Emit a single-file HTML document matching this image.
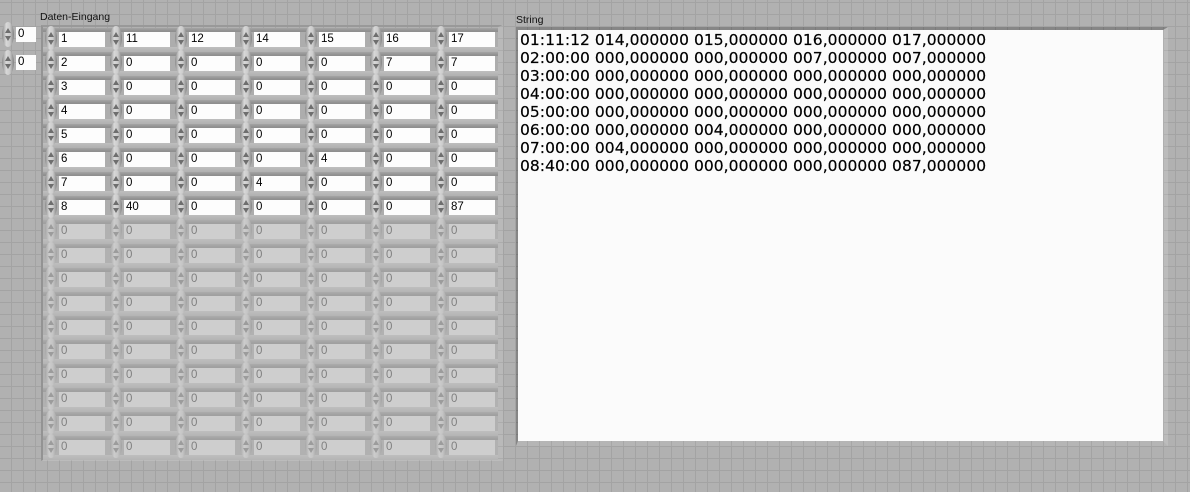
<!DOCTYPE html>
<html><head><meta charset="utf-8"><style>
html,body{margin:0;padding:0}
body{width:1190px;height:492px;overflow:hidden;position:relative;background:#b1b1b1;font-family:"Liberation Sans",sans-serif}
.gy{position:absolute;left:0;top:2px;width:1190px;height:490px;background:repeating-linear-gradient(180deg,#a3a3a3 0 1px,transparent 1px 12px)}
.gx{position:absolute;left:11px;top:0;width:1179px;height:492px;background:repeating-linear-gradient(90deg,#a3a3a3 0 1px,transparent 1px 12px)}
.l{position:absolute;font-size:10.5px;line-height:12px;color:#111}
#arr{position:absolute;left:41px;top:25px;width:462px;height:436px;border-top:2px solid #999;border-left:2px solid #939393;border-right:5px solid rgba(255,255,255,.1);border-bottom:1px solid rgba(255,255,255,.15);box-sizing:border-box;display:grid;grid-template-columns:repeat(7,65px);grid-auto-rows:24px;padding:1px 0 0 0}
s,u{display:block;position:relative;text-decoration:none;width:65px;height:24px;background:linear-gradient(#a4a4a4 0,#8f8f8f 3px,#8f8f8f 4px,#adadad 4px,#adadad 19px,#bebebe 19px,#b0b0b0 24px)}
u{background:linear-gradient(#acacac 0,#a0a0a0 3px,#a0a0a0 4px,#b1b1b1 4px,#b1b1b1 19px,#bebebe 19px,#b4b4b4 24px)}
s::before,u::before,.z::before{content:"";position:absolute;left:2px;top:-2px;width:12px;height:24px;border-radius:50%;background:linear-gradient(90deg,#8c8c8c,#d8d8d8 35%,#cbcbcb 65%,#828282)}
u::before{background:linear-gradient(90deg,#a6a6a6,#cccccc 35%,#c4c4c4 65%,#a2a2a2)}
s::after,u::after,.z::after{content:"";position:absolute;left:5px;top:4px;width:6px;height:13px;background:#6e6e6e;clip-path:polygon(50% 0,100% 38%,50% 38%,50% 62%,100% 62%,50% 100%,0 62%,50% 62%,50% 38%,0 38%)}
u::after{background:#9c9c9c}
s b,u b{position:absolute;left:16px;top:4px;width:46px;height:15px;background:#fdfdfd;font:normal 11.5px/15px "Liberation Sans",sans-serif;color:#000;padding-left:2px;box-sizing:border-box}
u b{background:#cecece;color:#808080}
.z{position:absolute;left:1px;width:37px;height:24px}
.z::before{left:1px;top:0;height:25px}
.z::after{left:4px;top:6px}
.z b{position:absolute;left:15px;top:5px;width:20px;height:15px;background:#fdfdfd;font:normal 11.5px/15px "Liberation Sans",sans-serif;padding-left:2px;box-sizing:border-box}
#str{position:absolute;left:516px;top:27px;width:652px;height:419px;border-top:3px solid rgba(0,0,0,.24);border-left:2px solid rgba(0,0,0,.24);border-right:5px solid rgba(255,255,255,.14);border-bottom:5px solid rgba(255,255,255,.05);box-sizing:border-box}
#txt{position:absolute;left:0;top:0;width:645px;height:411px;background:#fbfbfb;font-family:"DejaVu Sans",sans-serif;font-size:15.5px;letter-spacing:.04px;line-height:18px;color:#000;padding:1px 0 0 2px;box-sizing:border-box;white-space:pre;-webkit-text-stroke:.2px #000}
</style></head><body>
<div class="gx"></div><div class="gy"></div>
<div class="l" style="left:40px;top:11px">Daten-Eingang</div>
<div class="l" style="left:516px;top:14px">String</div>
<div class="z" style="top:22px"><b>0</b></div>
<div class="z" style="top:50px"><b>0</b></div>
<div id="arr">
<s><b>1</b></s><s><b>11</b></s><s><b>12</b></s><s><b>14</b></s><s><b>15</b></s><s><b>16</b></s><s><b>17</b></s>
<s><b>2</b></s><s><b>0</b></s><s><b>0</b></s><s><b>0</b></s><s><b>0</b></s><s><b>7</b></s><s><b>7</b></s>
<s><b>3</b></s><s><b>0</b></s><s><b>0</b></s><s><b>0</b></s><s><b>0</b></s><s><b>0</b></s><s><b>0</b></s>
<s><b>4</b></s><s><b>0</b></s><s><b>0</b></s><s><b>0</b></s><s><b>0</b></s><s><b>0</b></s><s><b>0</b></s>
<s><b>5</b></s><s><b>0</b></s><s><b>0</b></s><s><b>0</b></s><s><b>0</b></s><s><b>0</b></s><s><b>0</b></s>
<s><b>6</b></s><s><b>0</b></s><s><b>0</b></s><s><b>0</b></s><s><b>4</b></s><s><b>0</b></s><s><b>0</b></s>
<s><b>7</b></s><s><b>0</b></s><s><b>0</b></s><s><b>4</b></s><s><b>0</b></s><s><b>0</b></s><s><b>0</b></s>
<s><b>8</b></s><s><b>40</b></s><s><b>0</b></s><s><b>0</b></s><s><b>0</b></s><s><b>0</b></s><s><b>87</b></s>
<u><b>0</b></u><u><b>0</b></u><u><b>0</b></u><u><b>0</b></u><u><b>0</b></u><u><b>0</b></u><u><b>0</b></u>
<u><b>0</b></u><u><b>0</b></u><u><b>0</b></u><u><b>0</b></u><u><b>0</b></u><u><b>0</b></u><u><b>0</b></u>
<u><b>0</b></u><u><b>0</b></u><u><b>0</b></u><u><b>0</b></u><u><b>0</b></u><u><b>0</b></u><u><b>0</b></u>
<u><b>0</b></u><u><b>0</b></u><u><b>0</b></u><u><b>0</b></u><u><b>0</b></u><u><b>0</b></u><u><b>0</b></u>
<u><b>0</b></u><u><b>0</b></u><u><b>0</b></u><u><b>0</b></u><u><b>0</b></u><u><b>0</b></u><u><b>0</b></u>
<u><b>0</b></u><u><b>0</b></u><u><b>0</b></u><u><b>0</b></u><u><b>0</b></u><u><b>0</b></u><u><b>0</b></u>
<u><b>0</b></u><u><b>0</b></u><u><b>0</b></u><u><b>0</b></u><u><b>0</b></u><u><b>0</b></u><u><b>0</b></u>
<u><b>0</b></u><u><b>0</b></u><u><b>0</b></u><u><b>0</b></u><u><b>0</b></u><u><b>0</b></u><u><b>0</b></u>
<u><b>0</b></u><u><b>0</b></u><u><b>0</b></u><u><b>0</b></u><u><b>0</b></u><u><b>0</b></u><u><b>0</b></u>
<u><b>0</b></u><u><b>0</b></u><u><b>0</b></u><u><b>0</b></u><u><b>0</b></u><u><b>0</b></u><u><b>0</b></u>
</div>
<div id="str"><div id="txt">01:11:12 014,000000 015,000000 016,000000 017,000000
02:00:00 000,000000 000,000000 007,000000 007,000000
03:00:00 000,000000 000,000000 000,000000 000,000000
04:00:00 000,000000 000,000000 000,000000 000,000000
05:00:00 000,000000 000,000000 000,000000 000,000000
06:00:00 000,000000 004,000000 000,000000 000,000000
07:00:00 004,000000 000,000000 000,000000 000,000000
08:40:00 000,000000 000,000000 000,000000 087,000000</div></div>
</body></html>
